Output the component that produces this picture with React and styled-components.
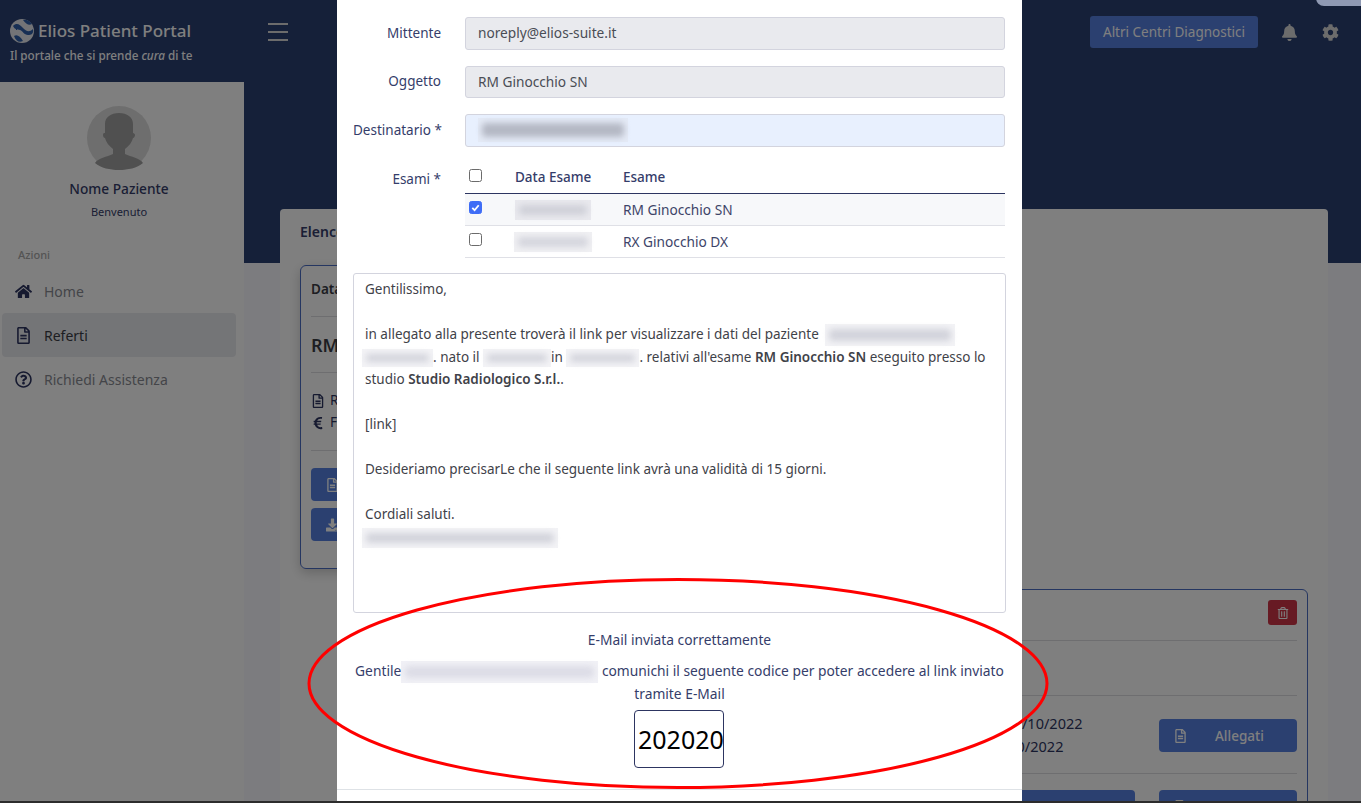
import React from 'react';
import styled, { createGlobalStyle } from 'styled-components';
import { FaHome, FaBell, FaCog, FaEuroSign, FaDownload, FaRegTrashAlt, FaRegFileAlt, FaRegQuestionCircle } from 'react-icons/fa';

const GlobalStyle = createGlobalStyle`
  html, body { margin: 0; height: 100%; overflow: hidden; }
  body { font-family: "Noto Sans", "Open Sans", sans-serif; font-size: 13.5px; color: #353d6a; background: #f8f9fb; }
  * { box-sizing: border-box; }
`;

const Shell = styled.div`
  position: relative;
  display: grid;
  grid-template-columns: 244px 1fr;
  width: 1361px;
  height: 803px;
  overflow: hidden;
  background: #f8f9fe;
`;

const Side = styled.aside`
  display: flex;
  flex-direction: column;
  height: 803px;
  background: #fff;
`;

const Brand = styled.div`
  display: flex;
  flex-direction: column;
  gap: 3px;
  height: 82px;
  padding: 18px 0 0 10px;
  background: #2a4072;
  color: #fff;
`;

const BrandName = styled.div`
  display: flex;
  align-items: center;
  gap: 4px;
  font-size: 17px;
  font-weight: 500;
  line-height: 26px;
`;

const Tagline = styled.div`
  font-size: 11.7px;
  font-weight: 500;
  line-height: 16px;
`;

const Profile = styled.div`
  display: flex;
  flex-direction: column;
  align-items: center;
  padding: 24px 6px 0 0;
`;

const Avatar = styled.svg`
  width: 64px;
  height: 64px;
  margin-bottom: 8px;
`;

const PatientName = styled.div`
  font-size: 13.7px;
  font-weight: 500;
  line-height: 22px;
`;

const Welcome = styled.div`
  margin-top: 3px;
  font-size: 11px;
  line-height: 18px;
`;

const NavTitle = styled.div`
  margin: 25px 0 5px 18px;
  font-size: 11px;
  font-weight: 500;
  line-height: 18px;
  color: #a8a8a8;
`;

const NavItem = styled.div`
  display: flex;
  align-items: center;
  height: 44px;
  margin: 0 8px 0 2px;
  padding-left: 13px;
  gap: 12px;
  border-radius: 4px;
  background: ${(p) => (p.$active ? '#e9eaee' : 'transparent')};
  color: ${(p) => (p.$active ? '#3a3d45' : '#888a92')};
  font-size: 14px;
  svg { width: 17px; height: 17px; color: #2d3561; }
`;

const Main = styled.main`
  display: flex;
  flex-direction: column;
  min-width: 0;
`;

const Topbar = styled.header`
  display: flex;
  align-items: center;
  height: 64px;
  padding: 0 22px 0 24px;
  background: #2a4072;
  color: #fff;
`;

const Burger = styled.div`
  display: flex;
  flex-direction: column;
  gap: 6px;
  width: 20px;
  margin-right: auto;
  i { display: block; height: 2px; background: #d8d8d8; }
`;

const CentriButton = styled.button`
  height: 32px;
  padding: 0 13px;
  border: 0;
  border-radius: 3px;
  background: #5680e0;
  color: #fff;
  font: inherit;
  margin-right: 23px;
`;

const TopIcon = styled.span`
  display: flex;
  margin-left: ${(p) => p.$gap || 0}px;
  color: #d8d8d8;
  svg { width: 17px; height: 17px; }
`;

const Hero = styled.div`
  height: 199px;
  background: #2a4072;
`;

const ListCard = styled.section`
  display: flex;
  flex-direction: column;
  width: 1048px;
  height: 700px;
  margin: -54px 0 0 36px;
  padding: 12px 20px 0;
  border-radius: 4px;
  background: #fff;
`;

const ListTitle = styled.h2`
  margin: 0 0 22px;
  font-size: 14px;
  font-weight: 600;
  line-height: 22px;
`;

const ExamCard = styled.article`
  display: flex;
  flex-direction: column;
  flex: none;
  width: 500px;
  height: ${(p) => p.$height}px;
  margin-bottom: 20px;
  align-self: ${(p) => (p.$right ? 'flex-end' : 'flex-start')};
  padding: 10px 10px 0;
  border: 1px solid #4a6cc2;
  border-radius: 6px;
  box-shadow: ${(p) => (p.$right ? 'none' : '0 4px 12px rgba(0, 0, 0, 0.2)')};
`;

const CardRow = styled.div`
  display: flex;
  align-items: ${(p) => p.$align || 'center'};
  justify-content: ${(p) => p.$justify || 'flex-start'};
  height: ${(p) => p.$height}px;
  flex: none;
  padding-bottom: ${(p) => p.$pb || 0}px;
  border-bottom: 1px solid #dcdce0;
  color: #3a3d45;
  font-size: ${(p) => p.$size || 13.5}px;
  font-weight: ${(p) => p.$weight || 400};
`;

const IconLine = styled.div`
  display: flex;
  align-items: center;
  gap: 5px;
  height: 22px;
  svg { width: 14px; height: 14px; color: #2d3561; }
`;

const InfoStack = styled.div`
  display: flex;
  flex-direction: column;
  justify-content: center;
  padding-left: ${(p) => p.$indent || 0}px;
  color: #2d3561;
  font-size: ${(p) => p.$size || 13.5}px;
  line-height: 23px;
`;

const ActionButton = styled.button`
  display: flex;
  align-items: center;
  flex: none;
  gap: 28px;
  width: 138px;
  height: 33px;
  margin-top: ${(p) => p.$top || 0}px;
  margin-bottom: ${(p) => p.$bottom ?? 7}px;
  padding: 0 15px;
  border: 0;
  border-radius: 4px;
  background: #5680e0;
  color: #fff;
  font: inherit;
  font-weight: 500;
  svg { width: 13px; height: 14px; }
`;

const ButtonRow = styled.div`
  display: flex;
  justify-content: flex-end;
  gap: 24px;
  padding-top: 16px;
`;

const TrashButton = styled.button`
  display: flex;
  align-items: center;
  justify-content: center;
  width: 29px;
  height: 25px;
  border: 0;
  border-radius: 3px;
  background: #cf3446;
  color: #fff;
  svg { width: 12px; height: 12px; }
`;

const Backdrop = styled.div`
  position: absolute;
  inset: 0 0 2px 0;
  background: rgba(0, 0, 0, 0.5);
`;

const BottomEdge = styled.div`
  position: absolute;
  left: 0;
  right: 0;
  bottom: 0;
  height: 2px;
  background: #2c2c2c;
`;

const Modal = styled.div`
  position: absolute;
  top: 0;
  left: 337px;
  width: 685px;
  height: 801px;
  padding: 17px 16px 0;
  overflow: hidden;
  background: #fff;
`;

const FormRow = styled.div`
  display: grid;
  grid-template-columns: 88px 540px;
  column-gap: 24px;
  align-items: ${(p) => (p.$top ? 'start' : 'center')};
  margin-bottom: ${(p) => p.$gap ?? 16}px;
`;

const Label = styled.label`
  padding: ${(p) => p.$offset || 0}px 0 2px;
  text-align: right;
  line-height: 22px;
  white-space: nowrap;
`;

const Field = styled.div`
  display: flex;
  align-items: center;
  height: ${(p) => p.$height || 33}px;
  padding: 0 12px 2px;
  border: 1px solid #d3d4de;
  border-radius: 3px;
  background: ${(p) => p.$bg || '#e9eaee'};
  color: #4a4d55;
  font-size: 13.7px;
`;

const Smudge = styled.span`
  position: relative;
  display: inline-block;
  width: ${(p) => p.$w}px;
  height: ${(p) => p.$h || 20}px;
  margin: ${(p) => p.$m || '0'};
  vertical-align: middle;
  background: ${(p) => p.$bg || '#f3f3f6'};
  &::after {
    content: '';
    position: absolute;
    inset: 5px 4px;
    border-radius: 4px;
    background: ${(p) => p.$ink || '#d2d3db'};
    filter: blur(3px);
  }
`;

const ExamTable = styled.table`
  width: 540px;
  border-collapse: collapse;
  table-layout: fixed;
  font-size: 13.7px;
  th {
    height: 31px;
    text-align: left;
    font-weight: 500;
    font-size: 13.5px;
    border-bottom: 1px solid #2d3561;
  }
  td {
    height: 32px;
    border-bottom: 1px solid #dfe0e6;
    color: #3d4468;
  }
  tbody tr:nth-child(odd) td { background: #f7f8fa; }
`;

const NarrowCol = styled.col`
  width: ${(p) => p.$w}px;
`;

const Check = styled.span`
  display: block;
  width: 13px;
  height: 13px;
  margin: -3px 0 0 3px;
  border: 1px solid ${(p) => (p.$on ? '#3f6df6' : '#6b6b6b')};
  border-radius: 2.5px;
  background: ${(p) => (p.$on ? '#3f6df6' : '#fff')};
  color: #fff;
  svg { display: block; width: 11px; height: 11px; }
`;

const MessageBox = styled.div`
  width: 653px;
  height: 340px;
  margin: 15px 0 0;
  padding: 4px 11px;
  border: 1px solid #d3d4de;
  border-radius: 3px;
  color: #3f4249;
  line-height: 22.5px;
  white-space: nowrap;
  b { font-weight: 600; }
`;

const MessageLine = styled.div`
  min-height: 22.5px;
`;

const SentNote = styled.div`
  display: flex;
  flex-direction: column;
  align-items: center;
  padding-top: 16px;
  font-size: 13.8px;
  line-height: 22px;
  text-align: center;
`;

const NoteLine = styled.div`
  margin-bottom: ${(p) => p.$gap || 0}px;
  white-space: nowrap;
`;

const CodeBox = styled.div`
  display: flex;
  align-items: center;
  width: 90px;
  height: 58px;
  margin: 5px 1px 0 0;
  padding-left: 3px;
  border: 1px solid #2d3561;
  border-radius: 4px;
  color: #000;
  font-size: 25px;
  overflow: hidden;
`;

const ModalFooter = styled.div`
  margin: 21px -16px 0;
  border-top: 1px solid #dee2e6;
`;

const Annotation = styled.svg`
  position: absolute;
  left: 306px;
  top: 577px;
  width: 744px;
  height: 213px;
  pointer-events: none;
`;

const Toast = styled.div`
  position: absolute;
  top: -12px;
  right: -10px;
  width: 55px;
  height: 18px;
  border-radius: 8px;
  background: #8f99b3;
`;

function Logo() {
  return (
    <svg width="24" height="24" viewBox="0 0 24 24">
      <circle cx="12" cy="12" r="12" fill="#e6e8ee" />
      <path d="M3 7c4-4 7-1 10 2s6 5 10 1c1 5-2 6-5 6-4 0-5-4-8-5S5 11 3 7z" fill="#2f5fa8" />
      <path d="M13 1c3-1 7 1 9 4-3 2-6 0-9-4zM4 17c3-2 6 0 9 5-4 2-7 0-9-5z" fill="#2f5fa8" />
    </svg>
  );
}

function DocIcon() {
  return <FaRegFileAlt />;
}

export default function App() {
  return (
    <Shell>
      <GlobalStyle />
      <Side>
        <Brand>
          <BrandName><Logo />Elios Patient Portal</BrandName>
          <Tagline>Il portale che si prende <em>cura</em> di te</Tagline>
        </Brand>
        <Profile>
          <Avatar viewBox="0 0 64 64">
            <circle cx="32" cy="32" r="32" fill="#dcdcdc" />
            <path d="M8 57c3-5 12-6 18-9v-5c-4-3-7-7-8-11-1 0-2-1-2-3s1-2 2-2v-9c0-7 6-11 14-11s14 4 14 11v9c1 0 2 1 2 2s-1 3-2 3c-1 4-4 8-8 11v5c6 3 15 4 18 9-6 5-15 7-24 7s-18-2-24-7z" fill="#a0a0a0" />
          </Avatar>
          <PatientName>Nome Paziente</PatientName>
          <Welcome>Benvenuto</Welcome>
        </Profile>
        <NavTitle>Azioni</NavTitle>
        <NavItem><FaHome />Home</NavItem>
        <NavItem $active><DocIcon />Referti</NavItem>
        <NavItem><FaRegQuestionCircle />Richiedi Assistenza</NavItem>
      </Side>
      <Main>
        <Topbar>
          <Burger><i /><i /><i /></Burger>
          <CentriButton>Altri Centri Diagnostici</CentriButton>
          <TopIcon><FaBell /></TopIcon>
          <TopIcon $gap={24}><FaCog /></TopIcon>
        </Topbar>
        <Hero />
        <ListCard>
          <ListTitle>Elenco Referti</ListTitle>
          <ExamCard $height={304}>
            <CardRow $height={41} $pb={14} $weight={600}>Data Esame</CardRow>
            <CardRow $height={56} $size={18} $weight={600}>RM Ginocchio SN</CardRow>
            <CardRow $height={78}>
              <InfoStack>
                <IconLine><DocIcon />Referto</IconLine>
                <IconLine><FaEuroSign />Fattura</IconLine>
              </InfoStack>
            </CardRow>
            <ActionButton $top={17}><DocIcon />Allegati</ActionButton>
            <ActionButton><FaDownload />Scarica</ActionButton>
          </ExamCard>
          <ExamCard $right $height={300}>
            <CardRow $height={41} $align="flex-start" $justify="flex-end"><TrashButton><FaRegTrashAlt /></TrashButton></CardRow>
            <CardRow $height={55} />
            <CardRow $height={78} $justify="space-between">
              <InfoStack $indent={98} $size={14.5}>
                <div>Data Esame: 25/10/2022</div>
                <div>Data Ref.: 30/10/2022</div>
              </InfoStack>
              <ActionButton $bottom={0} $top={2}><DocIcon />Allegati</ActionButton>
            </CardRow>
            <ButtonRow>
              <ActionButton><DocIcon />Referto</ActionButton>
              <ActionButton><DocIcon />Immagini</ActionButton>
            </ButtonRow>
          </ExamCard>
        </ListCard>
      </Main>
      <Backdrop />
      <Toast />
      <BottomEdge />
      <Modal>
        <FormRow>
          <Label>Mittente</Label>
          <Field>noreply@elios-suite.it</Field>
        </FormRow>
        <FormRow>
          <Label>Oggetto</Label>
          <Field $height={32}>RM Ginocchio SN</Field>
        </FormRow>
        <FormRow $gap={15}>
          <Label>Destinatario *</Label>
          <Field $bg="#e8f0fe"><Smudge $w={150} $h={24} $bg="#e4eaf6" $ink="#b4b8c4" /></Field>
        </FormRow>
        <FormRow $top $gap={0}>
          <Label $offset={6}>Esami *</Label>
          <ExamTable>
            <colgroup>
              <NarrowCol $w={49} />
              <NarrowCol $w={108} />
              <NarrowCol />
            </colgroup>
            <thead>
              <tr><th><Check /></th><th>Data Esame</th><th>Esame</th></tr>
            </thead>
            <tbody>
              <tr>
                <td>
                  <Check $on>
                    <svg viewBox="0 0 12 12"><path d="M2.5 6.5l2.5 2.5 4.5-5.5" fill="none" stroke="currentColor" strokeWidth="2" /></svg>
                  </Check>
                </td>
                <td><Smudge $w={76} $bg="#e9e9ee" $ink="#cfd0d8" /></td>
                <td>RM Ginocchio SN</td>
              </tr>
              <tr>
                <td><Check /></td>
                <td><Smudge $w={78} $m="0 0 0 -1px" $bg="#f0f0f3" $ink="#d4d5dd" /></td>
                <td>RX Ginocchio DX</td>
              </tr>
            </tbody>
          </ExamTable>
        </FormRow>
        <MessageBox>
          <MessageLine>Gentilissimo,</MessageLine>
          <MessageLine />
          <MessageLine>in allegato alla presente troverà il link per visualizzare i dati del paziente <Smudge $w={130} $h={22} $m="0 0 0 3px" /></MessageLine>
          <MessageLine><Smudge $w={71} $h={18} $m="0 0 0 -3px" />. nato il <Smudge $w={68} $h={18} />in <Smudge $w={73} $h={18} />. relativi all'esame <b>RM Ginocchio SN</b> eseguito presso lo</MessageLine>
          <MessageLine>studio <b>Studio Radiologico S.r.l.</b>.</MessageLine>
          <MessageLine />
          <MessageLine>[link]</MessageLine>
          <MessageLine />
          <MessageLine>Desideriamo precisarLe che il seguente link avrà una validità di 15 giorni.</MessageLine>
          <MessageLine />
          <MessageLine>Cordiali saluti.</MessageLine>
          <MessageLine><Smudge $w={196} $m="0 0 0 -3px" /></MessageLine>
        </MessageBox>
        <SentNote>
          <NoteLine $gap={9}>E-Mail inviata correttamente</NoteLine>
          <NoteLine>Gentile<Smudge $w={197} $h={22} $bg="#f1f1f6" $ink="#dcdce6" /> comunichi il seguente codice per poter accedere al link inviato</NoteLine>
          <NoteLine>tramite E-Mail</NoteLine>
          <CodeBox>202020</CodeBox>
        </SentNote>
        <ModalFooter />
      </Modal>
      <Annotation viewBox="0 0 744 213">
        <ellipse cx="372" cy="106.5" rx="369" ry="104" fill="none" stroke="#ff0000" strokeWidth="3" />
      </Annotation>
    </Shell>
  );
}
